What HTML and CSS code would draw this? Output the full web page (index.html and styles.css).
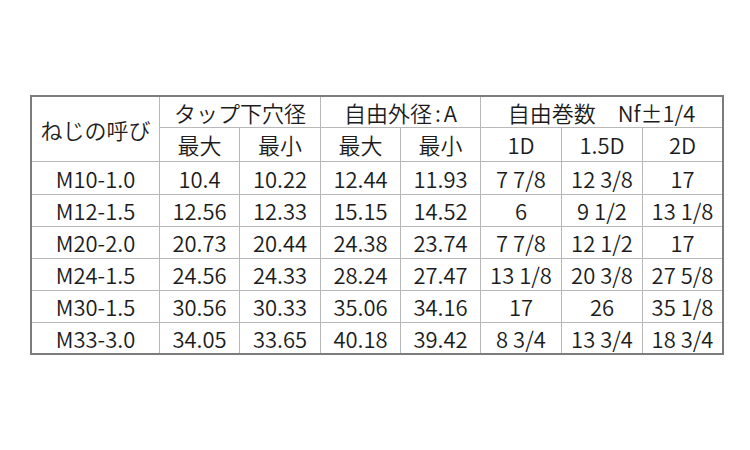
FILE: index.html
```html
<!DOCTYPE html>
<html lang="ja">
<head>
<meta charset="utf-8">
<title>ねじの呼び</title>
<link rel="stylesheet" href="styles.css">
</head>
<body>
<div class="page">
  <div class="spec">
    <div class="cell name">ねじの呼び</div>
    <div class="cell span2">タップ下穴径</div>
    <div class="cell span2">自由外径<span class="colon">:</span>A</div>
    <div class="cell span3">自由巻数　Nf±1/4</div>

    <div class="cell">最大</div>
    <div class="cell">最小</div>
    <div class="cell">最大</div>
    <div class="cell">最小</div>
    <div class="cell">1D</div>
    <div class="cell">1.5D</div>
    <div class="cell">2D</div>

    <div class="cell">M10-1.0</div><div class="cell">10.4</div><div class="cell">10.22</div><div class="cell">12.44</div><div class="cell">11.93</div><div class="cell">7 7/8</div><div class="cell">12 3/8</div><div class="cell">17</div>
    <div class="cell">M12-1.5</div><div class="cell">12.56</div><div class="cell">12.33</div><div class="cell">15.15</div><div class="cell">14.52</div><div class="cell">6</div><div class="cell">9 1/2</div><div class="cell">13 1/8</div>
    <div class="cell">M20-2.0</div><div class="cell">20.73</div><div class="cell">20.44</div><div class="cell">24.38</div><div class="cell">23.74</div><div class="cell">7 7/8</div><div class="cell">12 1/2</div><div class="cell">17</div>
    <div class="cell">M24-1.5</div><div class="cell">24.56</div><div class="cell">24.33</div><div class="cell">28.24</div><div class="cell">27.47</div><div class="cell">13 1/8</div><div class="cell">20 3/8</div><div class="cell">27 5/8</div>
    <div class="cell">M30-1.5</div><div class="cell">30.56</div><div class="cell">30.33</div><div class="cell">35.06</div><div class="cell">34.16</div><div class="cell">17</div><div class="cell">26</div><div class="cell">35 1/8</div>
    <div class="cell">M33-3.0</div><div class="cell">34.05</div><div class="cell">33.65</div><div class="cell">40.18</div><div class="cell">39.42</div><div class="cell">8 3/4</div><div class="cell">13 3/4</div><div class="cell">18 3/4</div>
  </div>
</div>
</body>
</html>
```

FILE: styles.css
```css
html, body {
  margin: 0;
  padding: 0;
  background: #ffffff;
}

.page {
  padding: 95px 0 0 30px;
}

.spec {
  display: inline-grid;
  grid-template-columns: 127px 79px 80px 79px 79px 80px 80px 79px;
  grid-template-rows: 30px 33px 32px 31px 31px 31px 31px 30px;
  gap: 1px;
  background: #b8b8b8;
  border: 2px solid #7c7c7c;
  font-family: "Noto Sans CJK JP", "Noto Sans", sans-serif;
  font-size: 22px;
  font-weight: 350;
  line-height: 1;
  color: #1c1c1c;
}

.cell {
  background: #ffffff;
  display: flex;
  align-items: center;
  justify-content: center;
  white-space: pre;
  padding-bottom: 1px;
}

.colon {
  margin: 0 3px;
}

.name {
  grid-row: span 2;
}

.span2 {
  grid-column: span 2;
}

.span3 {
  grid-column: span 3;
}
```
